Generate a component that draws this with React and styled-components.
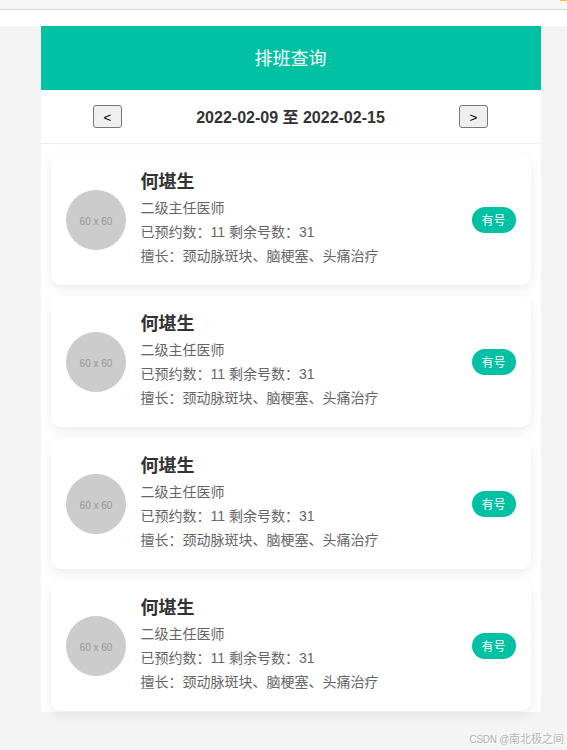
import React from 'react';
import styled, { createGlobalStyle } from 'styled-components';

const GlobalStyle = createGlobalStyle`
    * {
        box-sizing: border-box;
    }
    body {
        margin: 0;
        height: 750px;
        overflow: hidden;
        background: #f4f4f4;
        font-family: "Liberation Sans", "Noto Sans CJK SC", sans-serif;
        color: #333;
    }
`;

const TopBar = styled.div`
    position: relative;
    height: 10px;
    background: #f7f7f7;
    border-bottom: 1px solid #d5d5d5;
`;

const Marker = styled.span`
    position: absolute;
    top: 0;
    right: 0;
    width: 7px;
    height: 1px;
    background: #ffc20e;
`;

const Gap = styled.div`
    height: 16px;
    background: #fff;
`;

const Container = styled.div`
    width: 500px;
    height: 686px;
    margin-left: 41px;
    background: #fff;
`;

const Header = styled.header`
    display: flex;
    align-items: center;
    justify-content: center;
    height: 64px;
    padding: 2px 1px 0 0;
    background: #00c1a4;
    color: #fff;
    font-size: 18px;
    line-height: 24px;
`;

const DateNav = styled.nav`
    display: flex;
    align-items: center;
    justify-content: space-between;
    height: 54px;
    padding: 0 53px 0 52px;
    border-bottom: 1px solid #eee;
`;

const NavButton = styled.button`
    width: 29px;
    height: 23px;
    padding: 2px 0 0;
    border: 1px solid #767676;
    border-radius: 3px;
    background: #efefef;
    color: #000;
    font-family: "Liberation Sans", sans-serif;
    font-size: 13.333px;
    line-height: 19px;
`;

const DateRange = styled.span`
    padding-top: 2px;
    font-size: 16px;
    font-weight: bold;
    line-height: 24px;
    white-space: nowrap;
`;

const DoctorList = styled.div`
    display: flex;
    flex-direction: column;
    gap: 11px;
    padding: 10px 10px 0;
`;

const Card = styled.div`
    display: flex;
    align-items: center;
    height: 131px;
    padding: 0 15px;
    border-radius: 10px;
    background: #fff;
    box-shadow: 0 4px 12px rgba(0, 0, 0, 0.08);
`;

const Avatar = styled.div`
    display: flex;
    align-items: center;
    justify-content: center;
    width: 60px;
    height: 60px;
    margin-right: 14.5px;
    padding-top: 3px;
    border-radius: 50%;
    background: #ccc;
    color: #969696;
    font-size: 10px;
`;

const Info = styled.div`
    flex: 1;
    padding-bottom: 3px;
`;

const Name = styled.h3`
    margin: 0;
    font-size: 18px;
    line-height: 27px;
`;

const Line = styled.p`
    margin: 0;
    color: #666;
    font-size: 14px;
    line-height: 24px;
    white-space: nowrap;
`;

const Status = styled.span`
    display: flex;
    align-items: center;
    justify-content: center;
    width: 44px;
    height: 26px;
    padding: 2px 1px 0 0;
    border-radius: 13px;
    background: #00c1a4;
    color: #fff;
    font-size: 12px;
    line-height: 18px;
`;

const Watermark = styled.div`
    position: absolute;
    right: 3px;
    top: 731px;
    color: #b4b4b4;
    font-size: 11px;
    line-height: 16px;
    white-space: nowrap;
    text-shadow: 1px 1px 0 #fff;
`;

const Site = styled.span`
    font-size: 10px;
    letter-spacing: -0.3px;
`;

const doctor = {
    name: '何堪生',
    title: '二级主任医师',
    booked: 11,
    left: 31,
    skill: '颈动脉斑块、脑梗塞、头痛治疗',
    status: '有号',
};

const doctors = [1, 2, 3, 4].map((id) => ({ id, ...doctor }));

const DoctorCard = ({ item }) => (
    <Card>
        <Avatar>60 x 60</Avatar>
        <Info>
            <Name>{item.name}</Name>
            <Line>{item.title}</Line>
            <Line>已预约数：{item.booked} 剩余号数：{item.left}</Line>
            <Line>擅长：{item.skill}</Line>
        </Info>
        <Status>{item.status}</Status>
    </Card>
);

const App = () => (
    <>
        <GlobalStyle />
        <TopBar>
            <Marker />
        </TopBar>
        <Gap />
        <Container>
            <Header>排班查询</Header>
            <DateNav>
                <NavButton>&lt;</NavButton>
                <DateRange>2022-02-09 至 2022-02-15</DateRange>
                <NavButton>&gt;</NavButton>
            </DateNav>
            <DoctorList>
                {doctors.map((item) => (
                    <DoctorCard key={item.id} item={item} />
                ))}
            </DoctorList>
        </Container>
        <Watermark><Site>CSDN @</Site>南北极之间</Watermark>
    </>
);

export default App;
